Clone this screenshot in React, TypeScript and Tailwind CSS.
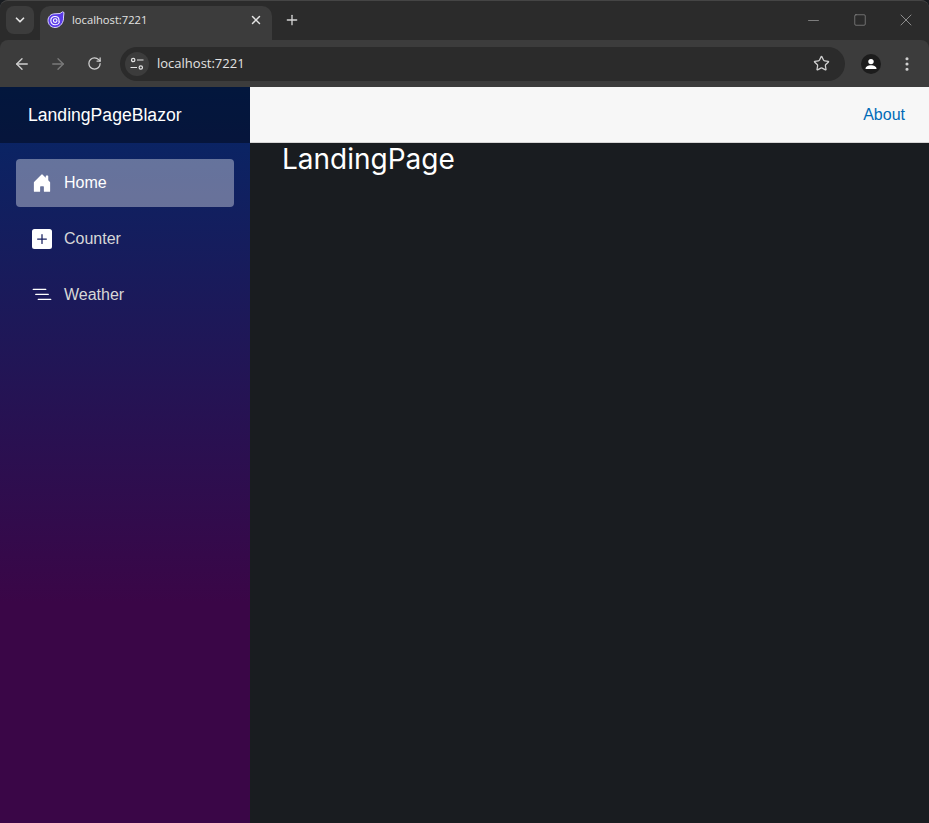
import React from "react";
import { ArrowLeft, ArrowRight, ChevronDown, EllipsisVertical, Minus, Plus, RotateCw, Square, Star, X } from "lucide-react";

const uiFont = "font-['Open_Sans','Noto_Sans',sans-serif]";

const BlazorFavicon = () => (
  <svg width="18" height="18" viewBox="0 0 18 18" fill="none">
    <path d="M1 9.500C1 5.500 4 2.800 8 2.800L13 2.500L15.500 .8L17 1.500L16.500 6C17 11 13.500 16.500 8 16.500C4 16.500 1 13.500 1 9.500Z" fill="#5a3be8" stroke="#d9d2ff" strokeWidth="1" />
    <path d="M12.500 10.500C12 13 10 13.800 8 13.800C5.500 13.800 3.800 12 3.800 9.600C3.800 7.200 5.600 5.500 8 5.500C10.400 5.500 12 7 12 9.300V11" stroke="#fff" strokeWidth="1.100" />
    <circle cx="8.200" cy="9.600" r="1.800" stroke="#fff" strokeWidth="1.100" />
  </svg>
);

const TuneIcon = () => (
  <svg width="16" height="16" viewBox="0 0 16 16" fill="none" stroke="#e3e3e3" strokeWidth="1.2">
    <circle cx="4.200" cy="4" r="1.700" />
    <path d="M8 4h6.500M1.500 11.500H8" />
    <circle cx="11.800" cy="11.500" r="1.700" />
  </svg>
);

const BrowserChrome = () => (
  <div className={`${uiFont} shrink-0 rounded-t-lg bg-[#2b2b2b] text-[#e3e3e3]`}>
    <div className="flex h-10 items-end rounded-t-lg border-t border-[#454545] pl-[6px]">
      <div className="mb-[6px] flex h-[28px] w-[28px] items-center justify-center rounded-lg bg-[#3c3c3c]">
        <ChevronDown size={14} strokeWidth={3} />
      </div>
      <div className="ml-[6px] flex h-[34px] w-[232px] items-center rounded-t-[10px] bg-[#3c3c3c] pb-[6px] pl-[7px] pr-[9px]">
        <BlazorFavicon />
        <span className="ml-[7px] flex-1 text-[11.2px]">localhost:7221</span>
        <X size={14} strokeWidth={2.5} />
      </div>
      <div className="mb-[6px] ml-[6px] flex h-[28px] w-[28px] items-center justify-center">
        <Plus size={16} strokeWidth={2} className="text-[#d5d5d5]" />
      </div>
      <div className="mb-[4px] ml-auto flex h-[32px] items-center pr-[13px] text-[#a0a0a0]">
        <Minus size={17} strokeWidth={1} />
        <Square size={14} strokeWidth={1} className="ml-[31px]" />
        <X size={20} strokeWidth={1} className="ml-[29px]" />
      </div>
    </div>
    <div className="flex h-[47px] items-center rounded-t-lg bg-[#3c3c3c] pl-[13px] pr-[13px]">
      <ArrowLeft size={18} strokeWidth={1.8} className="text-[#d0d0d0]" />
      <ArrowRight size={18} strokeWidth={1.8} className="ml-[18px] text-[#7a7a7a]" />
      <RotateCw size={15} strokeWidth={2} className="ml-[20px] text-[#d0d0d0]" />
      <div className="ml-[18px] flex h-[34px] w-[725px] items-center rounded-full bg-[#2b2b2b] pl-[5px] pr-[15px]">
        <div className="flex h-6 w-6 items-center justify-center rounded-full bg-[#3c3c3c]">
          <TuneIcon />
        </div>
        <span className="ml-[8px] flex-1 text-[13px]">localhost:7221</span>
        <Star size={17} strokeWidth={1.8} className="text-[#d0d0d0]" />
      </div>
      <div className="ml-4 flex h-5 w-5 items-center justify-center overflow-hidden rounded-full bg-[#1c1c1c]">
        <svg width="14" height="14" viewBox="0 0 14 14" fill="#fff">
          <circle cx="7" cy="4.600" r="2.700" />
          <path d="M1.500 12c0-2.600 2.600-3.700 5.500-3.700s5.500 1.100 5.500 3.700z" />
        </svg>
      </div>
      <EllipsisVertical size={18} strokeWidth={2.2} className="ml-[17px] text-[#d0d0d0]" />
    </div>
  </div>
);

const HomeIcon = () => (
  <svg width="20" height="20" viewBox="0 0 16 16" fill="#fff">
    <path d="M6.500 14.500v-3.505c0-.245.25-.495.5-.495h2c.25 0 .5.25.5.5v3.500a.5.5 0 0 0 .5.5h4a.5.5 0 0 0 .5-.5v-7a.5.5 0 0 0-.146-.354L13 5.793V2.500a.5.5 0 0 0-.5-.5h-1a.5.5 0 0 0-.5.5v1.293L8.354 1.146a.5.5 0 0 0-.708 0l-6 6A.5.5 0 0 0 1.500 7.500v7a.5.5 0 0 0 .5.5h4a.5.5 0 0 0 .5-.5z" />
  </svg>
);

const PlusIcon = () => (
  <svg width="20" height="20" viewBox="0 0 16 16" fill="#fff">
    <path d="M2 0a2 2 0 0 0-2 2v12a2 2 0 0 0 2 2h12a2 2 0 0 0 2-2V2a2 2 0 0 0-2-2H2zm6.500 4.500v3h3a.5.5 0 0 1 0 1h-3v3a.5.5 0 0 1-1 0v-3h-3a.5.5 0 0 1 0-1h3v-3a.5.5 0 0 1 1 0z" />
  </svg>
);

const ListIcon = () => (
  <svg width="20" height="20" viewBox="0 0 16 16" fill="#fff">
    <path d="M4.500 11.500A.5.5 0 0 1 5 11h10a.5.5 0 0 1 0 1H5a.5.5 0 0 1-.5-.5zm-2-4A.5.5 0 0 1 3 7h10a.5.5 0 0 1 0 1H3a.5.5 0 0 1-.5-.5zm-2-4A.5.5 0 0 1 1 3h10a.5.5 0 0 1 0 1H1a.5.5 0 0 1-.5-.5z" />
  </svg>
);

const navItems = [
  { label: "Home", icon: <HomeIcon />, active: true },
  { label: "Counter", icon: <PlusIcon />, active: false },
  { label: "Weather", icon: <ListIcon />, active: false },
];

export default function App() {
  return (
    <div className="flex h-screen w-full flex-col overflow-hidden bg-[#191c20] font-['Liberation_Sans',Arial,sans-serif]">
      <BrowserChrome />
      <div className="flex min-h-0 flex-1">
        <aside className="flex w-[250px] shrink-0 flex-col bg-[linear-gradient(180deg,#052767_0%,#3a0647_70%)]">
          <div className="flex h-14 shrink-0 items-center bg-black/40 pl-7 text-[17.6px] text-white">LandingPageBlazor</div>
          <nav className="flex flex-col px-4 pt-4">
            {navItems.map((item) => (
              <div
                key={item.label}
                className={`mb-2 flex h-12 items-center rounded-[4px] px-4 ${
                  item.active ? "bg-white/[0.37] text-white" : "text-[#d7d7d7]"
                }`}
              >
                <span className="flex w-5 justify-center">{item.icon}</span>
                <span className="ml-3 text-base">{item.label}</span>
              </div>
            ))}
          </nav>
        </aside>
        <main className="flex min-w-0 flex-1 flex-col">
          <header className="flex h-14 shrink-0 items-center justify-end border-b border-[#d6d5d5] bg-[#f7f7f7] pr-6">
            <a className="text-base text-[#006bb7]">About</a>
          </header>
          <div className="px-8">
            <h1 className="font-['Inter',sans-serif] text-[28px] leading-[32px] text-white">LandingPage</h1>
          </div>
        </main>
      </div>
    </div>
  );
}
